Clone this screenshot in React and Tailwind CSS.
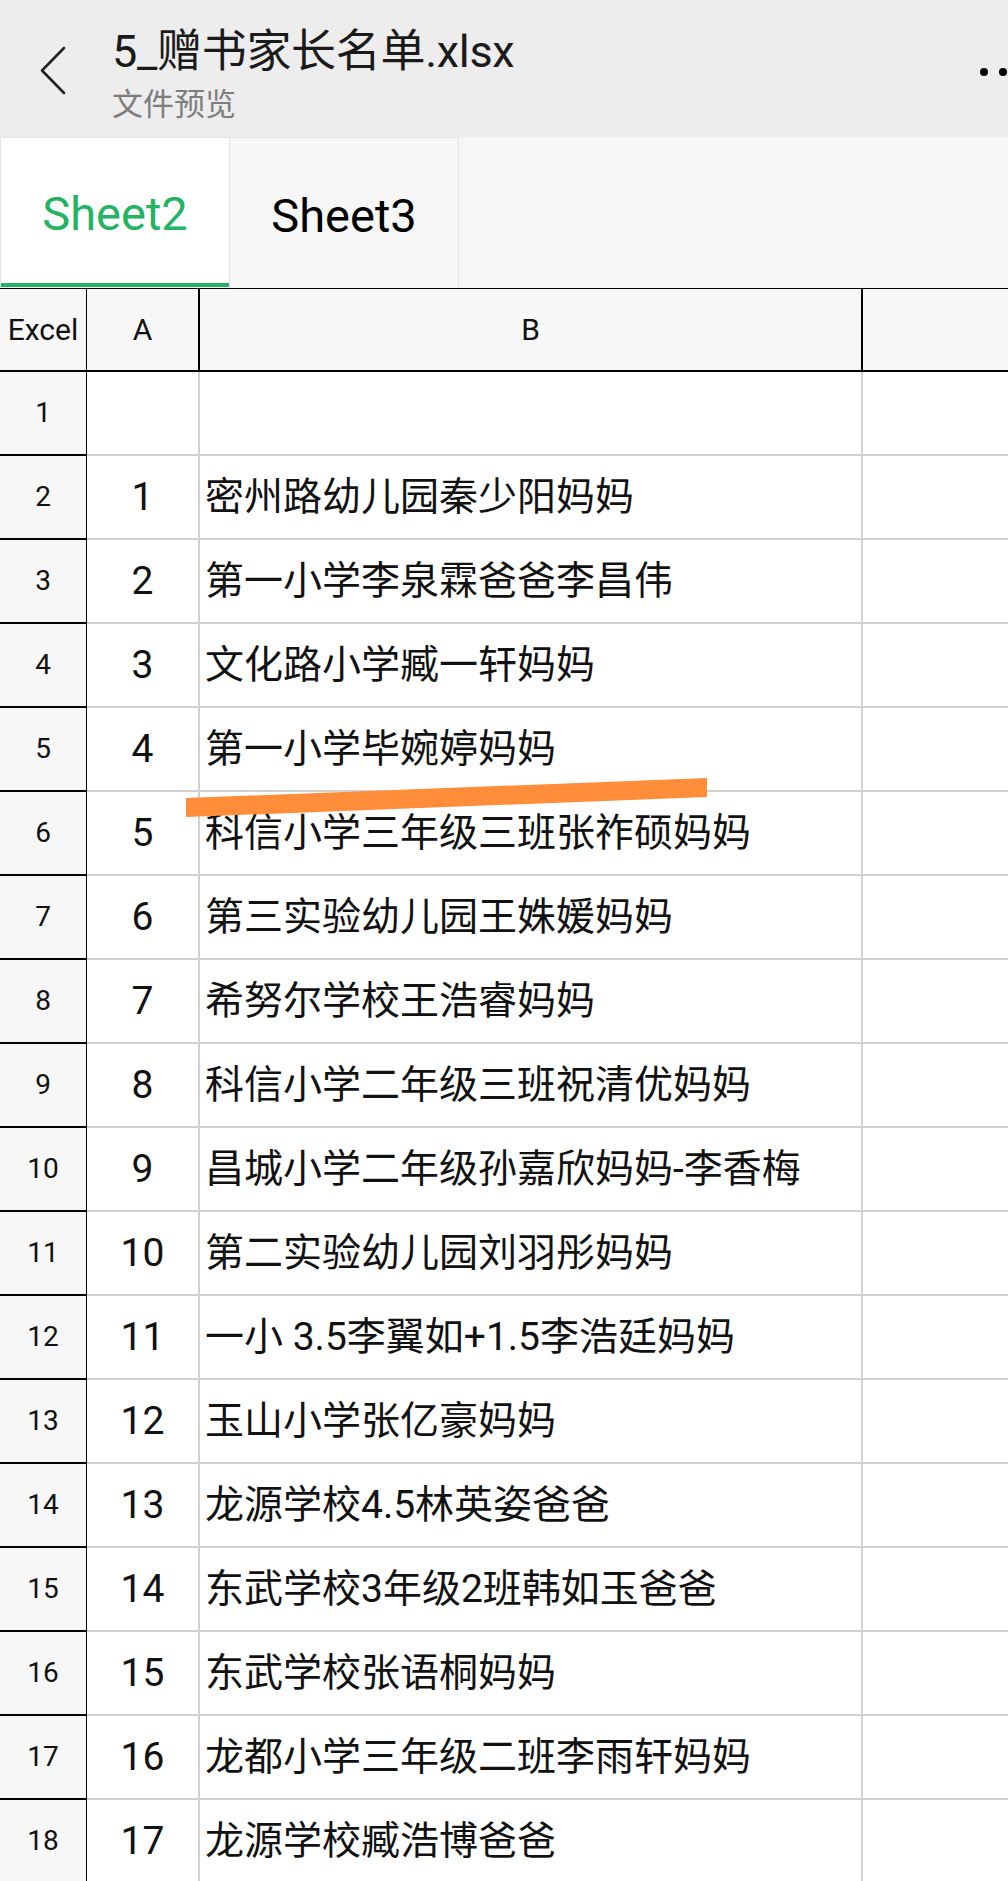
import React from 'react';

const rows = [
  ['', ''],
  ['1', '密州路幼儿园秦少阳妈妈'],
  ['2', '第一小学李泉霖爸爸李昌伟'],
  ['3', '文化路小学臧一轩妈妈'],
  ['4', '第一小学毕婉婷妈妈'],
  ['5', '科信小学三年级三班张祚硕妈妈'],
  ['6', '第三实验幼儿园王姝媛妈妈'],
  ['7', '希努尔学校王浩睿妈妈'],
  ['8', '科信小学二年级三班祝清优妈妈'],
  ['9', '昌城小学二年级孙嘉欣妈妈-李香梅'],
  ['10', '第二实验幼儿园刘羽彤妈妈'],
  ['11', '一小 3.5李翼如+1.5李浩廷妈妈'],
  ['12', '玉山小学张亿豪妈妈'],
  ['13', '龙源学校4.5林英姿爸爸'],
  ['14', '东武学校3年级2班韩如玉爸爸'],
  ['15', '东武学校张语桐妈妈'],
  ['16', '龙都小学三年级二班李雨轩妈妈'],
  ['17', '龙源学校臧浩博爸爸'],
];

export default function App() {
  return (
    <div className="relative w-[1008px] h-[1881px] overflow-hidden bg-white text-[#111] font-['Roboto','Noto_Sans_CJK_SC',sans-serif]">
      {/* Top bar */}
      <div className="flex h-[137px] bg-[#ededed]">
        <svg
          className="ml-[38px] mt-[44px] shrink-0"
          width="32"
          height="54"
          viewBox="0 0 32 54"
          fill="none"
        >
          <polyline
            points="26,4 4,26.5 26,49"
            stroke="#222"
            strokeWidth="2.6"
            strokeLinecap="round"
            strokeLinejoin="round"
          />
        </svg>
        <div className="ml-[42px] flex-1 pt-[24px]">
          <p className="text-[45px] leading-[56px] tracking-[-0.3px] text-[#1a1a1a]">5_赠书家长名单.xlsx</p>
          <p className="mt-[7px] text-[31px] leading-[36px] text-[#7d7d7d]">文件预览</p>
        </div>
        <div className="mt-[68px] flex w-[28px] shrink-0 gap-[11px] self-start">
          <span className="block size-[8px] shrink-0 rounded-full bg-black" />
          <span className="block size-[8px] shrink-0 rounded-full bg-black" />
          <span className="block size-[8px] shrink-0 rounded-full bg-black" />
        </div>
      </div>

      {/* Sheet tabs */}
      <div className="flex h-[151px] bg-[#f7f7f7]">
        <div className="flex w-[230px] flex-col border-t border-r border-l border-[#e3e3e3] bg-white">
          <div className="flex flex-1 items-center justify-center pt-[8px] text-[47px] text-[#22b463]">
            Sheet2
          </div>
          <div className="h-[4px] bg-[#22b463]" />
          <div className="h-[1px]" />
        </div>
        <div className="flex w-[229px] items-center justify-center border-t border-r border-[#e3e3e3] pt-[6px] text-[47px] text-black">
          Sheet3
        </div>
      </div>

      {/* Column header */}
      <div className="flex h-[84px] border-t border-b-2 border-black bg-[#f7f7f7] text-[30px]">
        <div className="flex w-[87px] shrink-0 items-center justify-center border-r border-black">Excel</div>
        <div className="flex w-[113px] shrink-0 items-center justify-center border-r-2 border-black">A</div>
        <div className="flex w-[663px] shrink-0 items-center justify-center border-r-2 border-black">B</div>
        <div className="flex-1" />
      </div>

      {/* Rows */}
      {rows.map(([num, name], i) => (
        <div key={i} className="flex h-[84px]">
          <div className="flex w-[87px] shrink-0 items-center justify-center border-r border-b-2 border-black bg-[#f7f7f7] text-[28px]">
            {i + 1}
          </div>
          <div className="flex w-[113px] shrink-0 items-center justify-center border-r-2 border-b-2 border-[#d0d0d0] text-[39px]">
            {num}
          </div>
          <div className="flex w-[663px] shrink-0 items-center border-r-2 border-b-2 border-[#d0d0d0] pl-[5px] text-[39px] whitespace-nowrap">
            {name}
          </div>
          <div className="flex-1 border-b-2 border-[#d0d0d0]" />
        </div>
      ))}

      {/* Hand-drawn highlight stroke */}
      <svg
        className="pointer-events-none absolute left-[180px] top-[772px]"
        width="535"
        height="52"
        viewBox="0 0 535 52"
      >
        <polygon points="6,26 527,6 527,25 6,45" fill="#ff8d3a" />
      </svg>
    </div>
  );
}
